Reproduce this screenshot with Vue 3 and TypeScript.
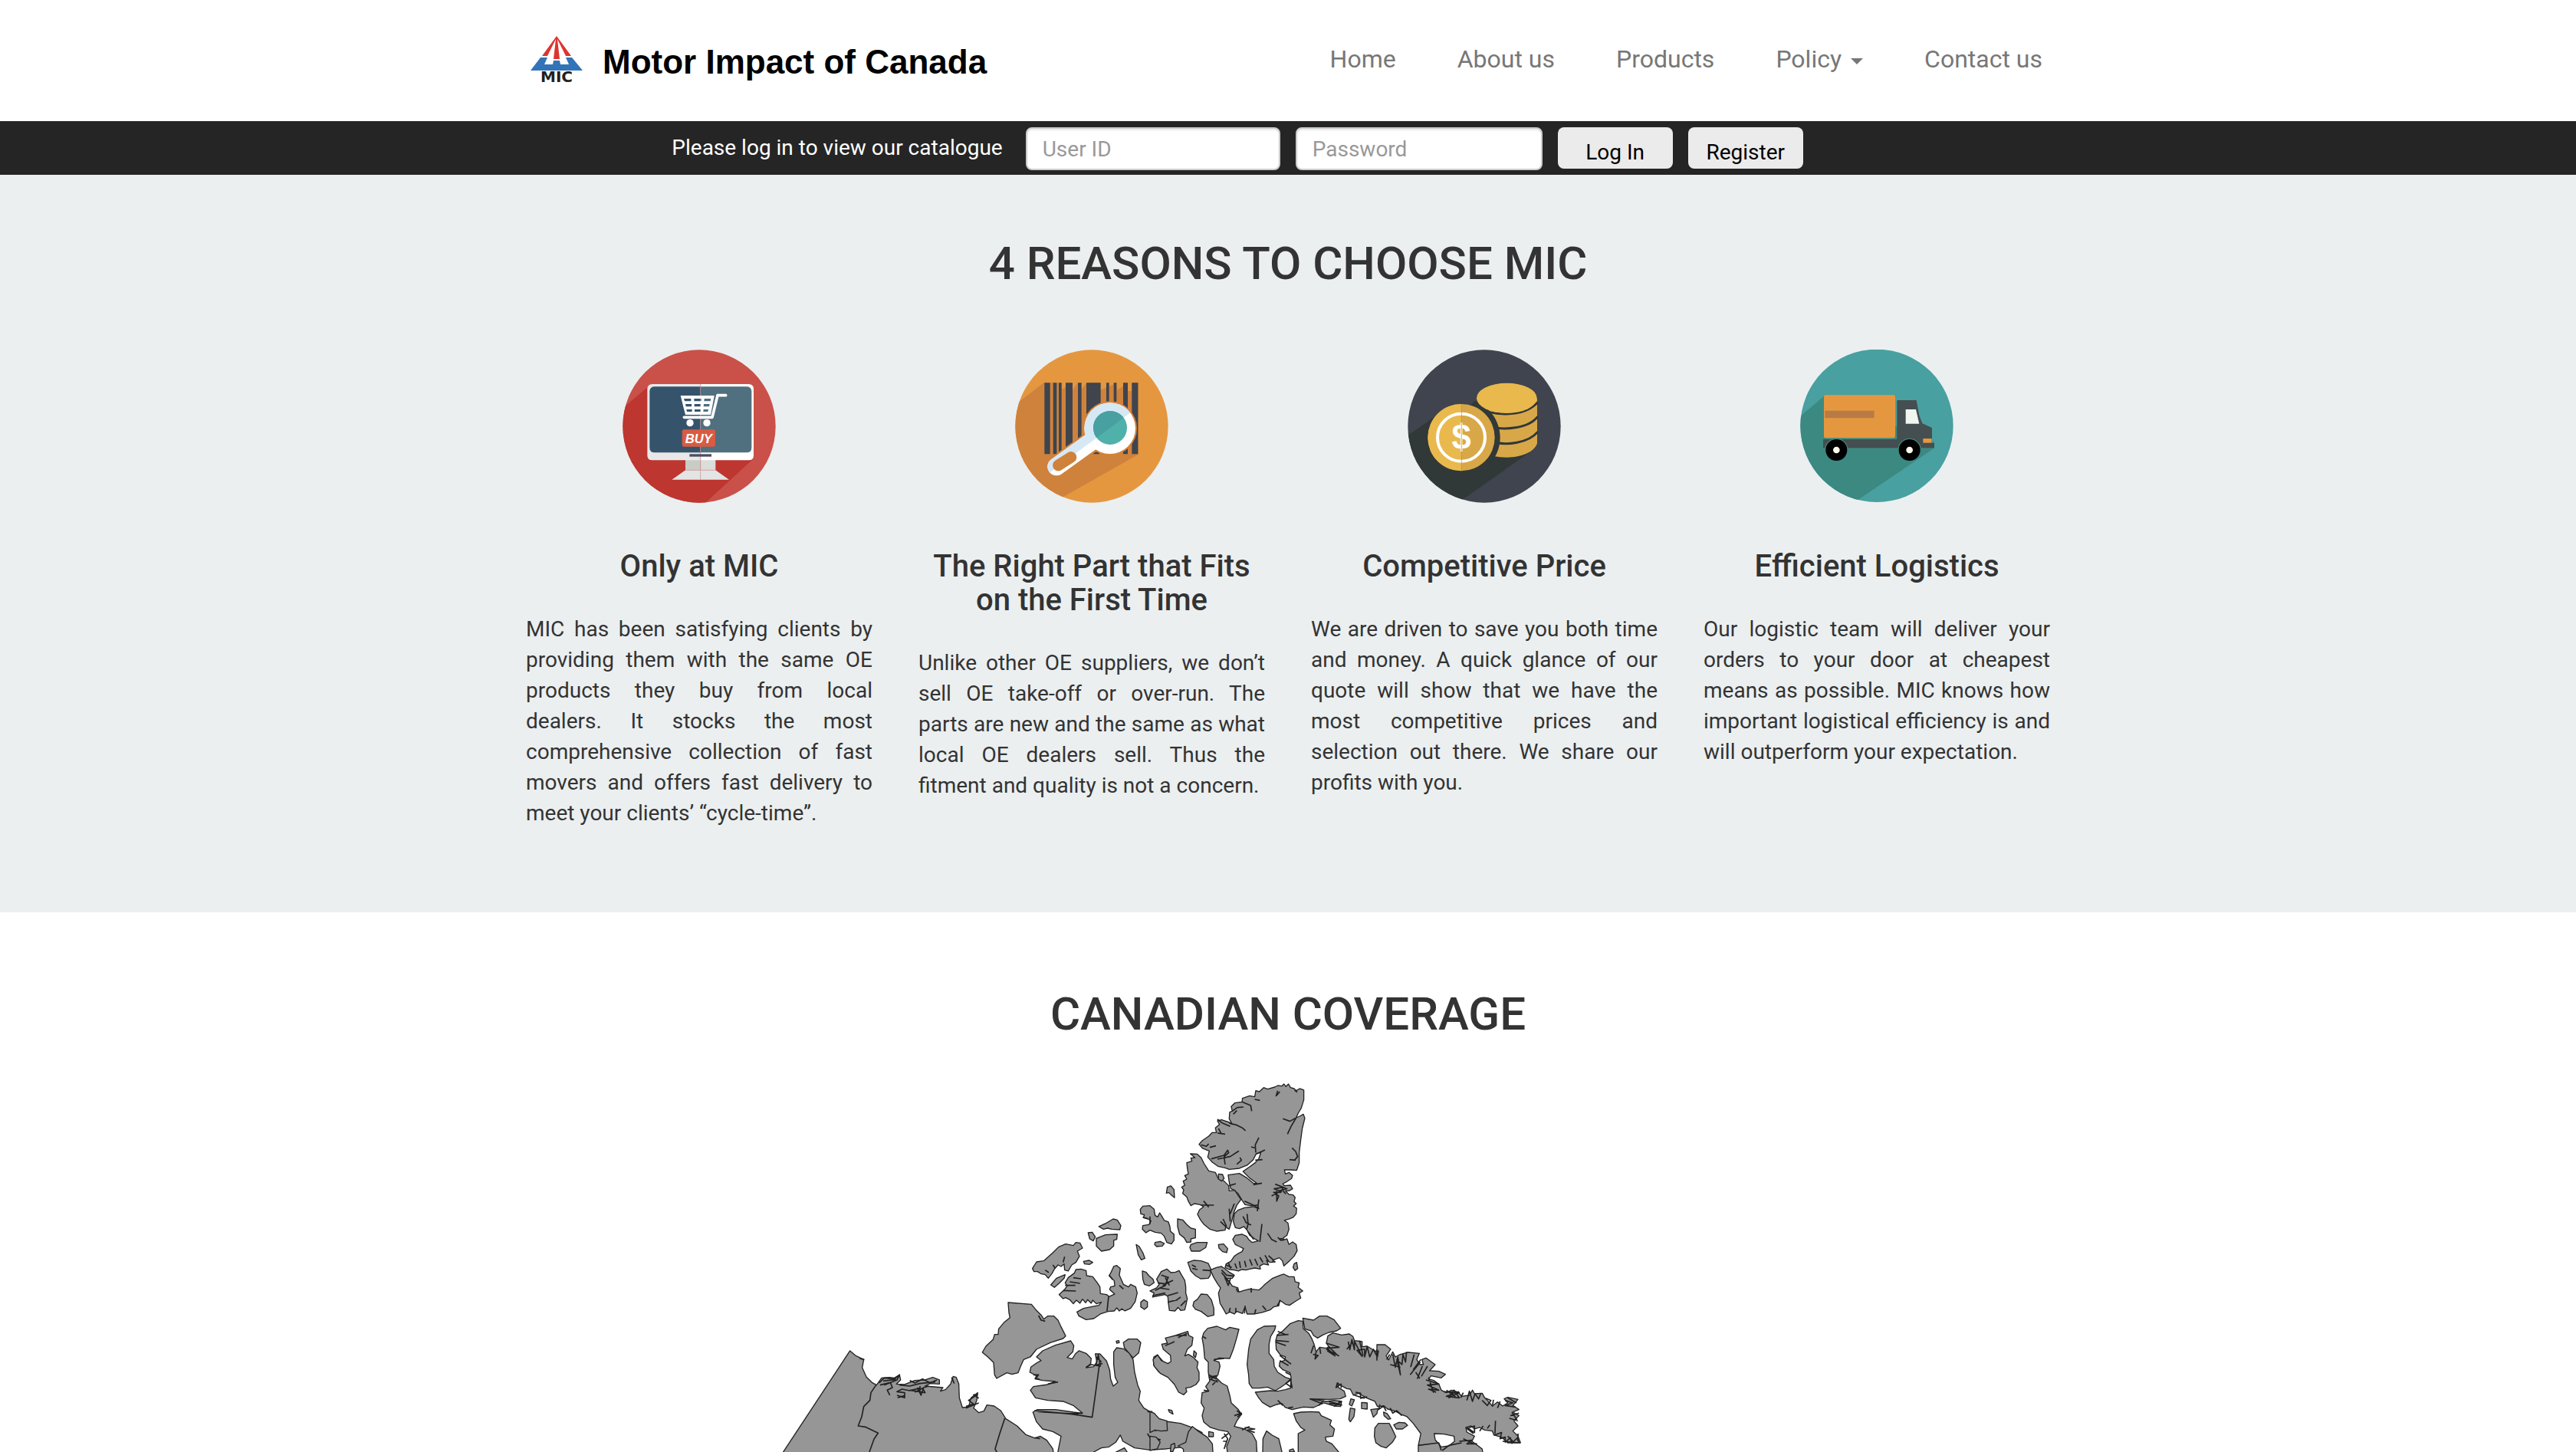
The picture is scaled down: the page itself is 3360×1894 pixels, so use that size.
<script setup lang="ts">
interface Tile {
  origin: string
  land: string[]
  water: string[]
  lines: string[]
}

interface Reason {
  icon: 'shop' | 'barcode' | 'coins' | 'truck'
  title: string
  text: string
}

const navItems = [
  { label: 'Home', menu: false },
  { label: 'About us', menu: false },
  { label: 'Products', menu: false },
  { label: 'Policy', menu: true },
  { label: 'Contact us', menu: false },
]

const reasons: Reason[] = [
  {
    icon: 'shop',
    title: 'Only at MIC',
    text: 'MIC has been satisfying clients by providing them with the same OE products they buy from local dealers. It stocks the most comprehensive collection of fast movers and offers fast delivery to meet your clients’ “cycle-time”.',
  },
  {
    icon: 'barcode',
    title: 'The Right Part that Fits on the First Time',
    text: 'Unlike other OE suppliers, we don’t sell OE take-off or over-run. The parts are new and the same as what local OE dealers sell. Thus the fitment and quality is not a concern.',
  },
  {
    icon: 'coins',
    title: 'Competitive Price',
    text: 'We are driven to save you both time and money. A quick glance of our quote will show that we have the most competitive prices and selection out there. We share our profits with you.',
  },
  {
    icon: 'truck',
    title: 'Efficient Logistics',
    text: 'Our logistic team will deliver your orders to your door at cheapest means as possible. MIC knows how important logistical efficiency is and will outperform your expectation.',
  },
]

// Each tile is drawn three units to the pixel from its own origin.
const tiles: Tile[] = [
  {
    // Arctic archipelago, north
    origin: 'translate(1320 1390) scale(0.3333)',
    land: [
      // Ellesmere Island
      'M954 98 968 102 985 86 1000 92 1028 84 1040 78 1056 80 1064 72 1072 82 1082 72 1090 86 1104 90 1112 98 1126 90 1142 96 1142 134 1132 166 1120 186 1112 204 1126 198 1140 190 1146 206 1136 246 1130 290 1124 340 1124 380 1114 410 1094 408 1066 408 1070 424 1084 418 1098 430 1094 442 1076 454 1060 462 1066 470 1090 468 1098 482 1084 490 1070 490 1084 504 1100 506 1108 516 1104 532 1112 540 1102 550 1114 558 1112 580 1100 594 1086 600 1066 606 1080 616 1084 640 1076 664 1060 676 1046 678 1060 684 1076 678 1084 700 1098 690 1112 700 1116 724 1104 746 1086 764 1064 784 1058 764 1046 752 1030 758 1020 764 1030 768 1010 770 996 762 1004 780 984 776 970 784 972 796 950 792 930 796 916 800 900 798 886 804 870 800 850 798 834 790 838 776 856 766 870 746 884 736 900 728 906 716 890 708 874 700 864 680 874 664 900 660 918 668 926 680 940 692 964 686 950 678 930 664 920 644 908 630 890 638 874 634 866 610 870 580 884 566 910 556 944 552 966 560 960 546 934 548 912 544 900 526 884 500 868 486 856 482 850 456 846 428 890 422 920 440 944 460 960 462 930 440 904 414 930 396 952 380 966 364 974 340 956 344 944 368 920 390 890 402 850 406 834 400 806 394 784 378 766 358 772 334 746 324 732 308 744 294 770 276 784 262 800 262 796 244 812 230 804 216 820 212 850 222 862 230 850 208 852 182 862 178 858 160 872 146 900 142 902 128 930 118 950 122Z',
      // Axel Heiberg Island
      'M698 345 724 346 740 360 752 384 770 412 796 418 806 440 830 452 848 470 850 490 872 488 886 510 896 524 880 546 870 570 862 600 850 640 836 632 834 644 800 648 774 640 750 620 738 604 726 582 734 564 750 552 736 544 714 540 700 548 690 530 684 514 668 500 672 486 664 476 676 468 670 452 684 444 676 430 690 424 686 400 684 380 704 374 700 362 716 360Z',
      'M808 424l16 2 6 16-10 10-12-8zM608 475l14-4 12 14 2 32-12-10-10-10-10 2z',
      'M502 562 512 550 540 548 556 562 560 586 570 592 578 576 588 592 596 606 612 612 618 630 620 648 634 660 634 684 624 698 606 692 596 668 584 656 560 652 540 644 524 654 510 640 512 626 536 622 544 608 530 598 514 594 518 584 504 580Z',
      'M648 600 668 604 684 622 700 636 718 640 718 674 700 678 700 690 684 692 674 674 656 660 648 630Z',
      'M560 692l20-4 16 8-8 10-22 2-8-8zM700 700 724 692 764 692 758 712 736 726 702 726 696 712ZM808 700 828 698 844 716 840 732 824 728 810 714Z',
      'M340 630 366 618 396 600 412 604 426 626 422 642 390 640 374 636 358 640ZM298 654 314 652 326 670 318 686 304 678ZM330 676 366 662 412 660 410 680 398 684 398 706 382 720 350 726 330 706ZM280 766l22-4 14 8-12 8-20-2z',
      'M486 700 498 708 512 732 520 754 506 760 494 740Z',
      'M80 794 96 768 124 764 140 750 160 732 182 710 210 698 240 704 250 692 266 694 276 714 256 726 264 746 250 770 234 780 220 804 206 800 204 776 192 786 180 780 166 796 156 814 142 832 130 818 112 814 100 806 86 806Z',
      'M152 858 174 832 208 818 204 832 184 852 166 868Z',
      // Melville Island
      'M220 830 244 812 250 798 270 796 290 802 292 822 316 826 334 850 344 866 346 892 370 896 380 904 402 894 382 876 386 866 402 862 400 842 380 822 388 808 398 786 410 782 424 794 420 820 436 856 456 866 464 856 484 866 490 890 482 924 464 950 442 960 430 952 420 960 410 948 400 960 376 962 346 972 320 990 290 994 262 980 254 964 280 950 310 944 340 938 350 926 330 932 316 918 310 930 296 916 288 928 276 914 266 930 252 918 240 932 226 916 210 908 200 912 184 896 206 876 216 862 208 850Z',
      'M510 804 524 808 536 822 552 836 556 850 538 862 518 856 512 836ZM504 926l12-10 14 8 0 20-12 10-14-10z',
      // Bathurst Island
      'M550 906 556 890 540 882 566 870 576 856 566 836 584 806 606 796 622 810 640 808 654 802 664 820 676 840 680 866 680 890 686 912 680 940 676 956 660 958 650 946 638 960 616 958 612 930 610 904 600 896Z',
      'M712 924 726 914 740 894 764 896 780 916 790 950 790 976 766 982 740 962 718 954 708 940Z',
      'M688 770 712 762 740 764 768 774 778 796 776 820 768 832 738 834 718 822 700 804Z',
      // Devon Island
      'M776 800 800 790 820 786 834 796 850 808 870 820 862 832 834 834 850 846 862 862 884 870 888 886 906 880 930 874 966 878 980 866 990 856 1020 832 1050 820 1064 816 1084 826 1104 826 1108 846 1124 850 1120 868 1138 882 1124 890 1130 910 1110 922 1086 938 1070 934 1048 918 1044 940 1024 944 1010 956 980 966 950 972 920 972 912 944 902 970 880 962 870 972 852 964 838 972 826 950 814 930 808 890 816 870 806 856 790 830Z',
      'M1104 776 1114 770 1118 794 1108 802 1100 790Z',
    ],
    water: [],
    lines: [
      'M850 225l30 8 20 10 14 12M804 210l18 14 32 14M862 178l20-14 24-2M900 142l34 14 4 22M950 132l20 4M1040 98l-6 20 14-16M1106 96l10 8M1060 208l28 10 20-12M1112 204l-20 34-14 30M966 282l-14 28 2 30M936 318l14 4M990 330l-34 16M980 368l-28 2M888 334l-34 22-50 10M774 320l24-6M820 268l-12-22M804 264l30 4M780 365l50-14 14-20 4 10-18 16 4 30M880 386l18-16-6-10M1096 322l14 14 8 20-14 16M1086 368l24 2M1030 464l26 10 20 8-30 8-20-8 36-6-10 20-28 0 20 14-8 20 0-40M1016 510l40-22M1060 490l12 12M910 530l30 14 26 14M966 524l-6 46M920 580l4 40-6 22M904 590l12 24 20 10M970 690l8-70M1000 656l16 24 20 10M1040 672l12 12 14-6M924 650l22 30M850 470l26-8M944 466l34-6M850 560l4 50M870 540l-16 40M740 546l50 0M750 530l20 24M816 610l20 20M826 600l14 30M836 780l24 10M846 770l10 24M872 774l8 20M890 766l4 26M910 764l6 24M930 758l10 24M950 756l12 26M970 750l12 20M990 742l14 24M1004 744l20 18M740 310l20 6 10-10M866 190l14-14M820 800l20 20 30 4M830 820l16 40 10-30M820 810l34 40M878 872l6 14M936 870l0 18M910 970l2-30M850 964l4-16M876 966l0-18M950 970l4-16M980 940l14 16M1050 920l-12 20M378 904l-6 56M208 860l40 0M200 880l50 2M240 830l30 4M226 846l40 6M560 880l40-20 10-30M550 900l50-10M590 860l40-20M600 830l16 30M570 850l30 4M576 870l40 6M584 820l30 10M610 900l40-12M610 926l40-10M640 920l20-14M660 940l20-20M540 590l0 30M512 594l20 6M380 820l14 18M420 860l16 14M200 770l6-22M130 800l14 10M160 780l10 14M746 800l30 2M704 780l16 8M706 794l20 4',
    ],
  },
  {
    // Yukon, Banks and Victoria islands
    origin: 'translate(1000 1680) scale(0.3333)',
    land: [
      'M40 690 66 640 326 246 350 266 380 280 374 312 390 348 412 370 430 380 450 352 480 350 500 352 520 340 524 360 508 376 540 378 580 362 620 360 650 350 676 360 676 376 640 374 620 384 690 390 680 404 700 398 720 376 730 346 742 350 752 376 754 430 766 468 790 466 800 430 826 410 822 440 810 470 830 488 850 482 862 458 890 462 916 480 936 512 980 540 1014 574 1050 588 1070 580 1096 596 1120 630 1130 700Z',
      'M945 57 1036 64 1054 86 1076 108 1084 122 1100 110 1124 110 1140 126 1152 152 1170 188 1160 198 1110 214 1056 240 1032 270 1006 280 994 306 984 332 960 338 940 332 900 354 892 340 888 292 868 272 844 252 858 228 886 202 892 182 906 182 908 160 930 134 952 116 948 96Z',
      'M1190 207 1202 226 1198 250 1176 272 1196 278 1208 258 1222 246 1250 256 1270 276 1268 296 1250 312 1280 308 1292 290 1286 258 1304 258 1330 286 1342 320 1346 356 1356 384 1374 370 1364 350 1358 300 1358 250 1370 234 1396 238 1420 256 1434 280 1440 330 1452 380 1462 404 1456 440 1476 470 1500 484 1530 510 1560 522 1620 530 1670 548 1704 566 1700 600 1660 620 1560 630 1500 634 1440 626 1394 600 1384 576 1366 604 1340 622 1310 626 1280 642 1270 700 1150 700 1140 640 1152 580 1120 562 1080 552 1056 524 1042 486 1060 476 1130 476 1200 486 1236 490 1200 460 1160 444 1100 440 1052 430 1032 400 1044 386 1100 378 1130 366 1080 362 1050 356 1056 344 1030 330 1034 310 1056 294 1074 284 1056 270 1080 246 1130 224Z',
      'M1396 214 1416 200 1450 200 1464 214 1456 254 1434 274 1414 250 1400 234ZM1368 208l10-2 2 8-10 2zM1515 270 1529 262 1543 278 1560 298 1562 342 1534 328 1514 300ZM1360 700 1360 646 1400 626 1416 650 1430 700Z',
    ],
    water: [],
    lines: [
      'M428 380l-20 30-4 30-24 24-8 40-14 36 28 4 50 24-16 24-18 50M932 510l-20 60-18 60 12 24M1302 300l-12 90-16 116-80-12-146-14M1060 484l160 10M440 372l20-20 40 4 20-16-10 20-50 20M444 380l40-10 8 20-20 10 10 20M456 364l50-6M520 380l40 4 40-10 60-6M560 362l20 10 30-16 30 16 26-12M510 420l30 10 0-20-30-4 20-10 30 6 40-10M512 430l26-8M590 390l14 30 10-30 20-6M560 400l60 10-10-18-30 16M600 384l0 30M780 464l30-10-20-14 34-22-14 0 20 14M830 450l-50 20M724 350l10 24M364 276l18 4M1250 310l20-10 36 6-8-44-10 40 26-6M1290 270l20 20M1064 108l10 18 16 4M1044 340l20 0-10 14 14 4M1100 376l40-8M1190 494l46-4M1490 570l20 30 30-6-30-10-10 30M1500 584l30 20M1490 484l20 0M1520 560l20-16M1050 586l20 4',
    ],
  },
  {
    // Baffin Island and the eastern coast
    origin: 'translate(1500 1680) scale(0.3333)',
    land: [
      'M210 176 226 158 262 150 296 164 312 154 348 162 338 200 326 240 312 276 270 274 250 284 270 290 274 306 266 340 258 350 280 372 302 384 312 420 318 450 344 474 358 494 340 520 330 542 370 552 400 570 416 600 422 700 310 700 300 620 316 580 304 562 270 556 236 546 210 524 204 500 212 470 200 450 204 410 230 404 218 386 234 364 228 330 228 290 214 276 210 230 204 196Z',
      'M60 196 100 186 148 170 152 186 168 194 164 224 146 240 136 266 150 260 170 272 188 290 184 312 192 330 192 362 180 378 160 388 140 392 144 406 132 418 112 408 96 378 70 350 40 334 16 306 12 280 30 262 44 284 70 296 82 288 80 264 52 240 46 220 68 216Z',
      'M598 130 580 128 548 140 520 168 498 184 492 206 494 240 510 262 530 270 526 284 508 290 506 306 520 320 548 332 552 350 550 392 530 398 500 404 470 402 412 408 424 428 440 448 470 466 496 456 516 452 530 468 556 476 600 466 640 468 680 450 720 462 746 464 750 444 720 440 690 444 626 434 700 436 744 434 766 424 760 404 738 390 734 372 748 382 770 394 784 396 796 420 816 412 850 432 880 444 890 464 916 462 930 474 960 482 980 494 1006 504 1030 530 1060 570 1050 616 1050 700 1310 700 1300 630 1260 600 1270 580 1240 564 1236 546 1256 540 1270 552 1290 546 1310 556 1340 560 1346 576 1376 584 1400 606 1450 606 1440 580 1420 560 1440 540 1424 520 1444 500 1420 486 1444 476 1420 460 1440 436 1400 428 1386 434 1400 450 1380 462 1360 446 1340 462 1320 440 1310 430 1300 412 1270 414 1262 400 1250 420 1220 424 1206 408 1180 400 1160 410 1140 400 1130 376 1110 362 1090 356 1100 344 1140 352 1156 338 1130 326 1094 324 1116 300 1080 274 1064 280 1070 300 1056 300 1044 280 1054 256 1010 252 980 260 960 270 950 250 934 282 924 266 942 240 920 222 888 222 888 250 870 240 850 228 830 230 830 210 800 206 794 190 780 180 750 184 716 176 696 188 690 216 700 230 690 236 664 232 650 250 642 220 632 196 620 176 600 160Z',
      'M386 340 380 300 386 240 394 200 420 164 446 150 492 148 488 164 472 190 466 220 466 256 484 280 486 306 500 330 530 350 550 356 530 376 510 390 490 402 460 388 430 392 400 392 388 374Z',
      'M598 118 640 126 664 110 692 110 720 124 746 158 730 168 700 174 676 184 656 196 640 186 630 168 606 160Z',
      'M562 492 590 486 630 484 662 486 670 500 710 518 704 536 722 552 716 580 686 584 690 600 712 610 740 644 740 700 580 700 580 570 606 556 590 546 572 520Z',
      'M880 548 894 530 936 530 946 548 962 582 950 602 924 626 904 620 884 606 878 580ZM954 536l20-10 24 2 10 10-20 14-24 0zM914 486l14 6 14 20-10 2-16-14zM828 448l22 2 0 24-22-2zM864 476l28-4-4 20-14 14zM784 470l18 4-4 30-14 20-6-10zM786 434l14 4-10 24-10-6z',
      'M110 618 140 604 150 564 166 542 188 560 224 584 244 610 250 700 140 700 130 630Z',
      'M440 700 442 590 456 560 478 576 504 590 516 640 516 700ZM0 580 24 584 40 604 28 630 0 636ZM82 614l14-6 2 12-8 20-10 0zM72 476l14 4 4 14-14-8zM546 634l14-4 6 12-20 0zM230 562l18 4 0 16-18 0zM172 246l10 10-4 16-8-8z',
      'M0 484 16 490 36 512 66 520 68 558 44 560 20 556 0 566Z',
    ],
    water: ['M1112 570 1150 572 1190 580 1192 600 1170 618 1140 622 1116 594Z'],
    lines: [
      'M496 186l46-4M492 206l52 4M492 212l40 14M500 170l30 12M508 264l44 34M508 284l34 20M550 360l6 30-24-16 22-16M690 216l50 16-46 4 30 30-30-20M640 226l-10 30M650 250l-4 28 12-14-20-4M664 232l4 26M690 240l50 26M700 230l30 30M776 210l6 32 8-40 10 40 0-34 30 60-20-24 30-4 0 30 10-40 10 40 14-30 16 30 4-26M820 206l14 60M770 240l20-24M888 240l0 44M926 280l12-20M950 260l10 50 10-40 10 70-14-60 20 20 4-40 10 30 4-40M940 300l40 10M1020 310l14-50M1030 320l30-40M1018 340l40-50M1040 330l16 24M1062 346l24-40M1046 356l20-50M1080 360l50 16-44 4 44 20-40-4 30 12M1090 350l20 60M1150 406l60 4-40 20 20-30 20 30-50-6 50-18M1160 400l40 30M1216 430l10-20M1240 440l10-36 12 40 10-30 14 20 8-20M1300 440l20 20 14-20-20-8M1340 464l4-26M1360 470l10-26M1390 440l30 10-30 10 40 6M1400 430l34 20M1410 500l34-10M1406 510l34 10M1416 486l20 30M1240 546l30 20 0-26-30 10 26 20M1290 560l14-20M1320 550l10-14M1350 570l2-50M1346 576l30-10-6 24 20-6 0 20 20-18 6 22 20-20 10 20M1380 600l60 6M1400 580l20 20M1440 570l0 30M1210 600l50-4-20 14 40 0M1226 590l40 20M734 370l-6 20 20-14 0 16M804 408l20 4 0 20 26-6M800 420l40 12M900 456l-6 20 20-14 10 20M940 470l10 20 16-10 20 20M626 434l50 20M700 444l50 14-50-6M720 464l30-20M740 460l0-20M660 460l20-20M500 440l20 20M540 470l20-4M230 350l30-6-24 14 30 10M230 340l30 16M244 380l20-20M250 280l40-4M60 226l36-16M104 186l40 0M110 194l36-16M330 500l28-10-16 16M340 480l20 16M370 546l40 6-30 4 30 10M360 556l30-14M290 570l14 20-14 40M280 590l26-20M300 600l-14 0M1050 616l80-10 10 30M1144 636l26-20 50-10M206 190l14 8M210 400l20 4M530 330l20 10',
    ],
  },
]
</script>

<template>
  <div class="page">
    <header class="wrap header">
      <a class="brand" href="#">
        <svg class="brand-mark" viewBox="0 0 68 60" aria-hidden="true">
          <path fill="#db3530" d="M34 0 53 26H46L35 4 38 30H30L33 4 22 26H15Z" />
          <path fill="#3274b7" d="M13 28H22L18 37H29L30 32H38L39 37H50L46 28H54L68 45H0Z" />
          <text x="34" y="60" text-anchor="middle">MIC</text>
        </svg>
        <span class="brand-name">Motor Impact of Canada</span>
      </a>
      <nav class="nav">
        <a v-for="item in navItems" :key="item.label" href="#" class="nav-link">
          {{ item.label }}<span v-if="item.menu" class="caret"></span>
        </a>
      </nav>
    </header>

    <form class="login" @submit.prevent>
      <span class="login-note">Please log in to view our catalogue</span>
      <input class="field field-user" type="text" placeholder="User ID" aria-label="User ID" />
      <input class="field field-pass" type="password" placeholder="Password" aria-label="Password" />
      <button class="btn" type="submit">Log In</button>
      <button class="btn" type="button">Register</button>
    </form>

    <section class="reasons">
      <h2 class="title">4 REASONS TO CHOOSE MIC</h2>
      <div class="wrap columns">
        <article v-for="reason in reasons" :key="reason.title" class="reason">
          <svg v-if="reason.icon === 'shop'" class="icon" viewBox="94 78 600 600" aria-hidden="true">
            <clipPath id="disc-shop"><circle cx="394" cy="378" r="299" /></clipPath>
            <circle cx="394" cy="378" r="299" fill="#ca5149" />
            <path clip-path="url(#disc-shop)" fill="#bd3630" d="M202 216 90 312V690H405L605 506Z" />
            <path fill="#c9ccc6" d="M340 505H399V552H340Z" />
            <path fill="#dcdcd9" d="M399 505H458V552H399Z" />
            <path fill="#e4e4e4" d="M340 550H458L511 587H287Z" />
            <path fill="#e8e8e9" d="M399 213H211Q191 213 191 233V491Q191 511 211 511H399Z" />
            <path fill="#fff" d="M399 213H587Q607 213 607 233V491Q607 511 587 511H399Z" />
            <path fill="#35546c" d="M399 223H220Q200 223 200 243V461Q200 481 220 481H399Z" />
            <path fill="#50707f" d="M399 223H579Q599 223 599 243V461Q599 481 579 481H399Z" />
            <path stroke="#c98f92" stroke-width="3" opacity=".7" d="M399 213V587M340 550H458" />
            <path fill="#4f4b62" d="M356 487H442V497H356Z" />
            <path fill="#fff" d="M321 258H453L439 333H340Z" />
            <path fill="#35546c" d="M334 270H362V280H337ZM374 270H399V280H374ZM340 291H364V301H342ZM375 291H399V301H375ZM344 312H366V321H346ZM376 312H399V321H376Z" />
            <path fill="#50707f" d="M399 270H402V280H399ZM414 270H440L438 280H413ZM412 291H435L433 301H411ZM411 312H430L428 321H410Z" />
            <path fill="none" stroke="#fff" stroke-width="11" stroke-linecap="round" stroke-linejoin="round" d="M498 257H466L445 343H335" />
            <circle cx="358" cy="365" r="14" fill="#fff" />
            <circle cx="424" cy="365" r="14" fill="#fff" />
            <rect x="327" y="391" width="130" height="67" rx="8" fill="#d95b43" />
            <text class="buy" x="392" y="443" text-anchor="middle">BUY</text>
          </svg>

          <svg v-else-if="reason.icon === 'barcode'" class="icon" viewBox="100 78 600 600" aria-hidden="true">
            <clipPath id="disc-barcode"><circle cx="400" cy="378" r="299" /></clipPath>
            <clipPath id="lens-upper"><path d="M0 0H600V289L180 601H0Z" /></clipPath>
            <circle cx="400" cy="378" r="299" fill="#e59740" />
            <path clip-path="url(#disc-barcode)" fill="#cf823c" d="M212 208 90 302V690H225L583 488V208H541L500 236V208L435 236V208H379L345 236V208H325L283 234V208Z" />
            <path fill="#e59740" d="M360 208H379L360 234ZM435 208H458L435 238ZM498 208H523L498 228ZM541 208H557V240H541ZM325 208H345L325 236ZM283 208H298L283 228Z" />
            <path fill="#3f444d" d="M215 208H237V487H215ZM249 208H263V487H249ZM271 208H282V487H271ZM298 208H325V487H298ZM346 208H360V430H346ZM379 208H435V330H379ZM457 208H468V282H457ZM486 208H497V282H486ZM523 208H541V487H523ZM557 208H581V487H557ZM405 478H430V487H405Z" />
            <path stroke="#cf823c" stroke-width="84" stroke-linecap="round" d="M262 536 440 410" />
            <circle cx="471" cy="386" r="106" fill="#d4843b" />
            <path stroke="#fff" stroke-width="70" stroke-linecap="round" d="M262 536 440 408" />
            <circle cx="471" cy="386" r="100" fill="#fff" />
            <g clip-path="url(#lens-upper)">
              <path stroke="#d7e8f5" stroke-width="70" stroke-linecap="round" d="M262 536 440 408" />
              <circle cx="471" cy="386" r="100" fill="#d7e8f5" />
            </g>
            <circle cx="472" cy="384" r="66" fill="#50b0aa" />
            <circle cx="472" cy="384" r="66" fill="#48a0a0" clip-path="url(#lens-upper)" />
            <path stroke="#cf823c" stroke-width="44" stroke-linecap="round" d="M269 531 319 499" />
          </svg>

          <svg v-else-if="reason.icon === 'coins'" class="icon" viewBox="105 78 600 600" aria-hidden="true">
            <clipPath id="disc-coins"><circle cx="405" cy="378" r="299" /></clipPath>
            <circle cx="405" cy="378" r="299" fill="#3f444e" />
            <path clip-path="url(#disc-coins)" fill="#313838" d="M215 338 90 425V690H285L585 478 450 290 374 272V290Z" />
            <path fill="#d8a848" d="M376 270H612V445C600 482 545 500 494 500Q468 500 440 495L400 330Z" />
            <path fill="none" stroke="#313838" stroke-width="9" d="M380 300C420 340 560 345 614 284M420 376C480 398 580 386 614 340M440 438C490 456 580 442 614 400" />
            <circle cx="316" cy="422" r="151" fill="#313838" clip-path="url(#coin-shade)" />
            <clipPath id="coin-shade"><path d="M316 553V340L374 270 480 320V493L316 600Z" /></clipPath>
            <ellipse cx="493" cy="268" rx="118" ry="59" fill="#e9b94d" />
            <circle cx="315" cy="422" r="131" fill="#d8a848" />
            <path fill="#e9b94d" d="M315 291A131 131 0 0 0 315 553Z" />
            <circle cx="315" cy="422" r="93" fill="none" stroke="#fff" stroke-width="12" />
            <text class="dollar" x="315" y="468" text-anchor="middle">$</text>
            <path stroke="#b28f49" stroke-width="2" d="M316 291V553" />
          </svg>

          <svg v-else class="icon" viewBox="84 78 600 600" aria-hidden="true">
            <clipPath id="disc-truck"><circle cx="384" cy="376" r="299" /></clipPath>
            <circle cx="384" cy="376" r="299" fill="#48a0a0" />
            <path clip-path="url(#disc-truck)" fill="#3c8981" d="M180 258 70 352V690H275L608 464V440Z" />
            <rect x="177" y="256" width="279" height="168" rx="7" fill="#e59740" />
            <path fill="#b97b45" d="M181 317H374V346H181Z" />
            <path fill="#454e50" d="M174 429H463V276H539L550 335 562 367 600 384V443H609V463H174Z" />
            <path fill="#f0f6ef" d="M497 312H537L550 368H497Z" />
            <path fill="#e59740" d="M565 426H599V443H565Z" />
            <g fill="#000" stroke="#3c8981" stroke-width="4">
              <circle cx="226" cy="471" r="44" />
              <circle cx="512" cy="471" r="44" />
            </g>
            <circle cx="226" cy="471" r="13" fill="#fffbea" />
            <circle cx="512" cy="471" r="13" fill="#fffbea" />
          </svg>

          <h3 class="reason-title">{{ reason.title }}</h3>
          <p class="reason-text">{{ reason.text }}</p>
        </article>
      </div>
    </section>

    <section class="coverage">
      <h2 class="title">CANADIAN COVERAGE</h2>
      <div class="wrap">
        <svg class="map" viewBox="656 1400 2048 494" role="img" aria-label="Map of Canada">
          <g v-for="tile in tiles" :key="tile.origin" :transform="tile.origin">
            <path v-for="shape in tile.land" :key="shape" class="land" :d="shape" />
            <path v-for="shape in tile.water" :key="shape" class="water" :d="shape" />
            <path v-for="line in tile.lines" :key="line" class="line" :d="line" />
          </g>
        </svg>
      </div>
    </section>
  </div>
</template>

<style>
body {
  margin: 0;
  background: #fff;
}
</style>

<style scoped>
.page {
  overflow: hidden;
  font-family: Roboto, sans-serif;
  font-size: 28px;
  line-height: 40px;
  color: #333;
}

.wrap {
  max-width: 2048px;
  margin: 0 auto;
}

.header {
  display: flex;
  justify-content: space-between;
  height: 158px;
}

.brand {
  display: flex;
  align-items: flex-start;
  gap: 26px;
  padding: 47px 0 0 36px;
  color: #000;
  text-decoration: none;
}

.brand-mark {
  width: 68px;
  height: 60px;
  overflow: visible;
}

.brand-mark text {
  font: bold 20px "DejaVu Sans", sans-serif;
  fill: #231f20;
}

.brand-name {
  padding-top: 8px;
  font: bold 44px/52px "Liberation Sans", sans-serif;
}

.nav {
  display: flex;
  padding-top: 57px;
}

.nav-link {
  padding: 0 40px;
  font-size: 32px;
  line-height: 40px;
  color: #777;
  text-decoration: none;
}

.caret {
  display: inline-block;
  margin-left: 12px;
  vertical-align: middle;
  border: 8px solid transparent;
  border-top-color: #777;
  border-bottom: 0;
}

.login {
  display: flex;
  justify-content: center;
  align-items: flex-start;
  gap: 20px;
  height: 62px;
  padding: 8px 132px 0 0;
  background: #252525;
}

.login-note {
  margin-right: 10px;
  padding-top: 7px;
  line-height: 40px;
  color: #fff;
}

.field {
  box-sizing: border-box;
  height: 56px;
  padding: 0 20px;
  border: 2px solid #ccc;
  border-radius: 8px;
  background: #fff;
  box-shadow: inset 0 2px 2px rgba(0, 0, 0, 0.08);
  font: 28px/40px Roboto, sans-serif;
}

.field::placeholder {
  color: #999;
}

.field-user {
  width: 332px;
}

.field-pass {
  width: 322px;
}

.btn {
  width: 150px;
  height: 54px;
  padding: 12px 0 0;
  border: 0;
  border-radius: 8px;
  background: #ebebeb;
  font: 28px/40px Roboto, sans-serif;
  color: #000;
}

.reasons {
  padding: 83px 0 109px;
  background: #ebeff0;
}

.title {
  margin: 0;
  font-size: 60px;
  font-weight: 500;
  line-height: 66px;
  text-align: center;
}

.columns {
  display: grid;
  grid-template-columns: repeat(4, 1fr);
  padding-top: 79px;
}

.reason {
  padding: 0 30px;
}

.icon {
  display: block;
  width: 200px;
  height: 200px;
  margin: 0 auto;
}

.buy {
  font: italic bold 50px "Liberation Sans", sans-serif;
  fill: #fff;
}

.dollar {
  font: bold 136px "Liberation Sans", sans-serif;
  fill: #fff;
}

.reason-title {
  margin: 61px 0 40px;
  font-size: 40px;
  font-weight: 500;
  line-height: 44px;
  text-align: center;
}

.reason-text {
  margin: 0;
  text-align: justify;
}

.coverage {
  padding-top: 100px;
}

.map {
  display: block;
  width: 100%;
  margin-top: 44px;
}

.land,
.water {
  fill: #969696;
  stroke: #222;
  stroke-width: 4;
  stroke-linejoin: round;
}

.water {
  fill: #fff;
}

.line {
  fill: none;
  stroke: #222;
  stroke-width: 5;
  stroke-linejoin: round;
}
</style>
